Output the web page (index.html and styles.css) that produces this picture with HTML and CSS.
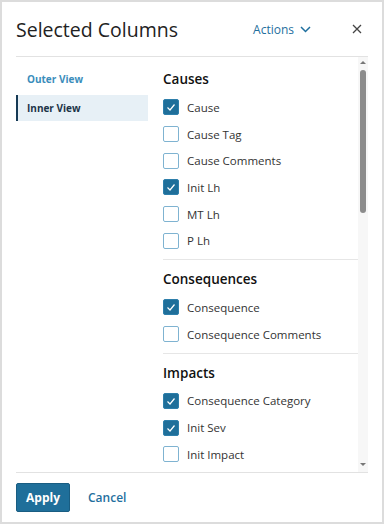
FILE: index.html
```html
<!DOCTYPE html>
<html lang="en">
<head>
    <meta charset="UTF-8">
    <meta name="viewport" content="width=device-width, initial-scale=1.0">
    <title>Selected Columns</title>
    <link rel="stylesheet" href="styles.css">
</head>
<body>
    <div class="dialog">
        <div class="dialog-header">
            <h1 class="dialog-title">Selected Columns</h1>
            <button class="actions-btn">Actions
                <svg width="11" height="7" viewBox="0 0 11 7"><polyline points="1,1 5.5,5.5 10,1" fill="none" stroke="#1f6f9e" stroke-width="1.5"/></svg>
            </button>
            <button class="close-btn" aria-label="Close">
                <svg width="10" height="10" viewBox="0 0 10 10"><path d="M1 1 L9 9 M9 1 L1 9" stroke="#444" stroke-width="1.3"/></svg>
            </button>
        </div>

        <div class="dialog-body">
            <div class="view-nav">
                <div class="view-item">Outer View</div>
                <div class="view-item active">Inner View</div>
            </div>

            <div class="column-list">
                <div class="column-scroll">
                    <div class="section">
                        <div class="section-title">Causes</div>
                        <label class="option"><span class="check checked"></span>Cause</label>
                        <label class="option"><span class="check"></span>Cause Tag</label>
                        <label class="option"><span class="check"></span>Cause Comments</label>
                        <label class="option"><span class="check checked"></span>Init Lh</label>
                        <label class="option"><span class="check"></span>MT Lh</label>
                        <label class="option"><span class="check"></span>P Lh</label>
                    </div>
                    <div class="section">
                        <div class="section-title">Consequences</div>
                        <label class="option"><span class="check checked"></span>Consequence</label>
                        <label class="option"><span class="check"></span>Consequence Comments</label>
                    </div>
                    <div class="section">
                        <div class="section-title">Impacts</div>
                        <label class="option"><span class="check checked"></span>Consequence Category</label>
                        <label class="option"><span class="check checked"></span>Init Sev</label>
                        <label class="option"><span class="check"></span>Init Impact</label>
                    </div>
                </div>

                <div class="scrollbar">
                    <span class="arrow-up"></span>
                    <div class="scroll-track"><div class="scroll-thumb"></div></div>
                    <span class="arrow-down"></span>
                </div>
            </div>
        </div>

        <div class="dialog-footer">
            <button class="apply-btn">Apply</button>
            <button class="cancel-btn">Cancel</button>
        </div>
    </div>
</body>
</html>
```

FILE: styles.css
```css
body {
    margin: 0;
    font-family: 'Open Sans', 'Liberation Sans', sans-serif;
    background: white;
}

.dialog {
    width: 384px;
    height: 524px;
    box-sizing: border-box;
    border: 2px solid #dcdcdc;
    padding: 0 14px;
    display: flex;
    flex-direction: column;
    background: white;
}

.dialog-header {
    height: 54px;
    flex-shrink: 0;
    display: flex;
    align-items: center;
    border-bottom: 1px solid #e2e2e2;
}

.dialog-title {
    flex: 1;
    margin: 0;
    font-size: 19.5px;
    font-weight: 400;
    color: #222;
}

.actions-btn {
    display: flex;
    align-items: center;
    gap: 6px;
    background: none;
    border: none;
    padding: 0;
    margin-right: 35px;
    font-family: inherit;
    font-size: 12px;
    font-weight: 500;
    color: #1f6f9e;
    cursor: pointer;
}

.close-btn {
    width: 22px;
    height: 22px;
    display: flex;
    align-items: center;
    justify-content: center;
    background: none;
    border: none;
    padding: 0;
    cursor: pointer;
}

.dialog-body {
    flex: 1;
    min-height: 0;
    display: flex;
    gap: 15px;
    border-bottom: 1px solid #e2e2e2;
}

.view-nav {
    width: 132px;
    padding-top: 9px;
}

.view-item {
    height: 26px;
    display: flex;
    align-items: center;
    margin-bottom: 3px;
    padding-left: 9px;
    border-left: 2px solid transparent;
    font-size: 10px;
    font-weight: 700;
    color: #3a8dbb;
}

.view-item.active {
    background: #e7f0f6;
    border-left-color: #163a55;
    color: #1c3448;
}

.column-list {
    flex: 1;
    display: flex;
    min-width: 0;
}

.column-scroll {
    flex: 1;
    overflow: hidden;
    padding-top: 3px;
}

.section {
    padding: 9px 0 5px;
    border-bottom: 1px solid #e6e6e6;
}

.section-title {
    font-size: 13.5px;
    font-weight: 600;
    line-height: 20px;
    color: #111;
    margin-bottom: 5px;
}

.option {
    height: 26.7px;
    display: flex;
    align-items: center;
    gap: 8px;
    font-size: 11.5px;
    color: #333;
}

.check {
    width: 16px;
    height: 16px;
    box-sizing: border-box;
    border: 1.5px solid #7fb3d1;
    border-radius: 2px;
    background: white;
    flex-shrink: 0;
}

.check.checked {
    border: 1px solid #2e7fab;
    background: #1f6f9a url("data:image/svg+xml,%3Csvg xmlns='http://www.w3.org/2000/svg' width='14' height='14' viewBox='0 0 14 14'%3E%3Cpolyline points='3.5,7.5 6,10 10.5,4.5' fill='none' stroke='white' stroke-width='1.2'/%3E%3C/svg%3E") center no-repeat;
}

.scrollbar {
    width: 10px;
    background: #f7f7f7;
    display: flex;
    flex-direction: column;
    align-items: center;
    padding: 4px 0 6px;
}

.arrow-up,
.arrow-down {
    width: 0;
    height: 0;
    border-left: 3px solid transparent;
    border-right: 3px solid transparent;
}

.arrow-up {
    border-bottom: 3px solid #777;
}

.arrow-down {
    border-top: 3px solid #777;
}

.scroll-track {
    flex: 1;
    width: 6px;
    padding-top: 6px;
}

.scroll-thumb {
    height: 143px;
    border-radius: 3px;
    background: #8c8c8c;
}

.dialog-footer {
    flex-shrink: 0;
    display: flex;
    align-items: center;
    gap: 18px;
    padding: 10px 0;
}

.apply-btn {
    width: 54px;
    height: 29px;
    background: #1f6f9a;
    border: 1px solid #195d82;
    border-radius: 2px;
    color: white;
    font-family: inherit;
    font-size: 12px;
    font-weight: 700;
    cursor: pointer;
}

.cancel-btn {
    background: none;
    border: none;
    padding: 0;
    font-family: inherit;
    font-size: 12px;
    font-weight: 600;
    color: #1f6f9e;
    cursor: pointer;
}
```
